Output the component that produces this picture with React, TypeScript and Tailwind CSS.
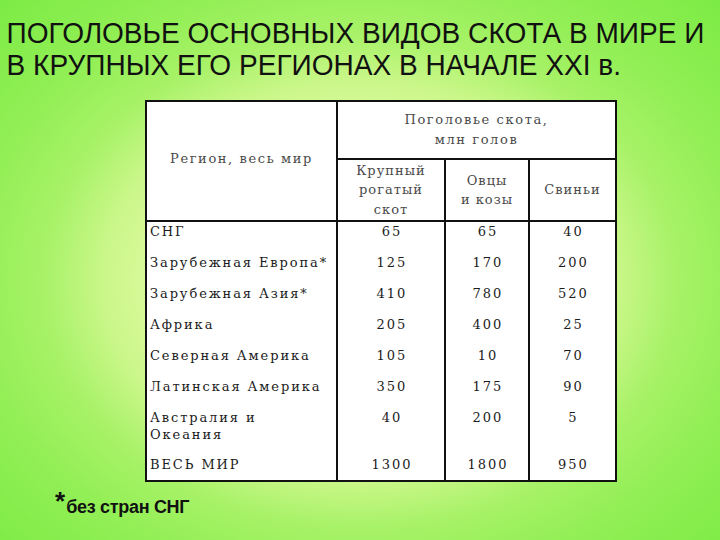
import React from "react";

const serif = { fontFamily: '"DejaVu Serif", "Liberation Serif", serif' };

const rows: { name: string[]; a: string; b: string; c: string; h: string }[] = [
  { name: ["СНГ"], a: "65", b: "65", c: "40", h: "h-[31px]" },
  { name: ["Зарубежная Европа*"], a: "125", b: "170", c: "200", h: "h-[31px]" },
  { name: ["Зарубежная Азия*"], a: "410", b: "780", c: "520", h: "h-[31px]" },
  { name: ["Африка"], a: "205", b: "400", c: "25", h: "h-[31px]" },
  { name: ["Северная Америка"], a: "105", b: "10", c: "70", h: "h-[31px]" },
  { name: ["Латинская Америка"], a: "350", b: "175", c: "90", h: "h-[31px]" },
  { name: ["Австралия и", "Океания"], a: "40", b: "200", c: "5", h: "h-[47px]" },
  { name: ["ВЕСЬ МИР"], a: "1300", b: "1800", c: "950", h: "h-[25px]" },
];

export default function App() {
  return (
    <div className="w-[720px] h-[540px] overflow-hidden flex flex-col bg-[radial-gradient(ellipse_farthest-corner_at_50%_52%,#f6ffcc_0%,#e8fcae_30%,#cbf78a_50%,#a8f268_62%,#93ef56_76%,#7ceb45_100%)]">
      <div
        className="pt-[17px] pl-[7px] text-[30px] leading-[32px] text-[#111] whitespace-nowrap scale-x-[0.935] origin-left"
        style={{ fontFamily: '"Liberation Sans", Arial, sans-serif' }}
      >
        <div>ПОГОЛОВЬЕ ОСНОВНЫХ ВИДОВ СКОТА В МИРЕ И</div>
        <div>В КРУПНЫХ ЕГО РЕГИОНАХ В НАЧАЛЕ XXI в.</div>
      </div>

      <div
        className="mt-[19px] ml-[145px] w-[472px] border-2 border-[#111] bg-white flex flex-col text-[13px] tracking-[2px]"
        style={serif}
      >
        {/* header */}
        <div className="flex h-[120px] border-b-2 border-[#111] text-[#4a4a4a]">
          <div className="w-[191px] border-r-2 border-[#111] flex items-center justify-center pb-[4px] tracking-[1.6px]">
            Регион, весь мир
          </div>
          <div className="flex-1 flex flex-col">
            <div className="h-[58px] border-b-2 border-[#111] flex flex-col items-center justify-center leading-[20px] tracking-[1.6px]">
              <div>Поголовье скота,</div>
              <div>млн голов</div>
            </div>
            <div className="flex-1 flex">
              <div className="w-[108px] border-r-2 border-[#111] flex flex-col items-center justify-center leading-[19.5px] tracking-[1px]">
                <div>Крупный</div>
                <div>рогатый</div>
                <div>скот</div>
              </div>
              <div className="w-[84px] border-r-2 border-[#111] flex flex-col items-center justify-center leading-[19.5px] tracking-[1px]">
                <div>Овцы</div>
                <div>и козы</div>
              </div>
              <div className="flex-1 flex items-center justify-center tracking-[1px]">
                Свиньи
              </div>
            </div>
          </div>
        </div>

        {/* body */}
        <div className="flex flex-col text-[#1c1c1c]">
          {rows.map((r, i) => (
            <div key={i} className={`flex ${r.h}`}>
              <div className="w-[191px] border-r-2 border-[#111] pl-[3px] leading-[17px] pt-[1px] whitespace-nowrap tracking-[1.9px]">
                {r.name.map((n, j) => (
                  <div key={j}>{n}</div>
                ))}
              </div>
              <div className="w-[108px] border-r-2 border-[#111] text-center leading-[17px] pt-[1px] pl-[2px]">
                {r.a}
              </div>
              <div className="w-[84px] border-r-2 border-[#111] text-center leading-[17px] pt-[1px] pl-[2px]">
                {r.b}
              </div>
              <div className="flex-1 text-center leading-[17px] pt-[1px] pl-[2px]">{r.c}</div>
            </div>
          ))}
        </div>
      </div>

      <div
        className="ml-[55px] mt-[6px] flex items-start text-[#111]"
        style={{ fontFamily: '"Liberation Sans", Arial, sans-serif' }}
      >
        <span className="text-[26px] leading-[26px] font-bold">*</span>
        <span className="text-[18px] leading-[20px] font-bold mt-[9px] ml-[1px] tracking-[-0.3px]">без стран СНГ</span>
      </div>
    </div>
  );
}
